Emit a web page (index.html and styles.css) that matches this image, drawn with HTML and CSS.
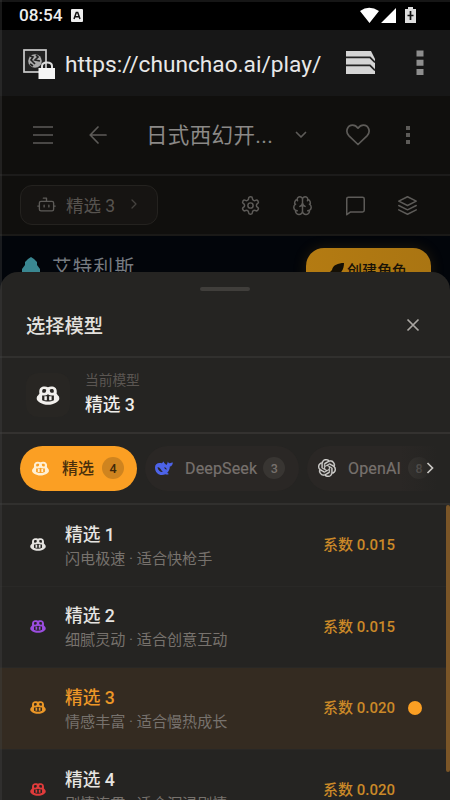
FILE: index.html
```html
<!DOCTYPE html>
<html lang="zh-CN">
<head>
<meta charset="utf-8">
<title>选择模型</title>
<link rel="stylesheet" href="styles.css">
</head>
<body>
<svg width="0" height="0" class="defs">
  <symbol id="copilot" viewBox="0 0 24 20">
    <path fill="currentColor" fill-rule="evenodd" d="M12 1.200C13.800.3 16 .2 18 .9c2 .7 3 2.300 3.200 4.300.1 1.200 0 2-.2 2.700L22.500 10c1.100.8 1.400 1.900 1.400 3.400 0 2.600-5.600 6.400-11.900 6.400S.1 16 .1 13.400C.1 11.900.4 10.800 1.500 10L3 7.900c-.2-.7-.3-1.500-.2-2.700C3 3.200 4 1.600 6 .9c2-.7 4.200-.6 6 .3ZM6.400 3.600c-.6.500-.7 2.600-.2 3.200.6.600 2.700.5 3.300-.3.500-.6.800-2.200.4-2.800-.5-.8-2.800-.7-3.500-.1Zm11.200 0c-.7-.6-3-.7-3.500.1-.4.600-.1 2.200.4 2.800.6.800 2.700.9 3.300.3.500-.6.400-2.700-.2-3.200ZM12 8.800c-1.600 1.300-4.200 1.600-6.200 1.100v5.100c3.400 1.900 9 1.900 12.400 0V9.900c-2 .5-4.600.2-6.200-1.100Z"/>
    <path fill="currentColor" d="M8.200 10.800h2.600v4.200H8.200zM13.200 10.800h2.600v4.200h-2.600z"/>
  </symbol>
</svg>
<div class="phone">
  <header class="status">
    <span>08:54</span>
    <svg class="lang" width="12" height="13" viewBox="0 0 12 13"><rect width="12" height="13" rx="1" fill="#eee"/><path d="M3 10 5.300 3.500h1.400L9 10M4 7.700h4" fill="none" stroke="#111" stroke-width="1.500"/></svg>
    <svg class="signals" width="58" height="18" viewBox="0 0 58 18"><path d="M0 5Q9-1.500 19 5L9.500 17ZM21 17 36 2v15Z" fill="#fff"/><path d="M45 3h3V1h5v2h3v14H45Z" fill="#ddd"/><path d="M50.500 5v9M47.500 9.500h6" stroke="#111" stroke-width="1.700"/></svg>
  </header>
  <div class="browser">
    <svg width="34" height="32" viewBox="0 0 34 32"><rect x="2" y="2" width="22" height="22" fill="#222" stroke="#ccc" stroke-width="1.700"/><circle cx="13" cy="13" r="6.800" fill="#aaa"/><path d="m8 8 3 1-2 3 4 4m1-9 2 2-3 3 5 1m-10 3 3 2" stroke="#222" stroke-width="1.700" fill="none"/><path d="M20 21v-3q0-3.500 5-3.500t5 3.500v3" fill="none" stroke="#ddd" stroke-width="2"/><path d="M16.500 20h16.500v11H16.500Z" fill="#f5f5f5"/></svg>
    <span class="url">https://chunchao.ai/play/</span>
    <svg class="stack" width="32" height="26" viewBox="0 0 32 26"><path d="M1 1h25l4 8v15H1Z" fill="#d5d5d5"/><path d="M1 7.300h24l5 5M1 15.300h24l5 5" fill="none" stroke="#242424" stroke-width="1.800"/></svg>
    <svg class="menu" width="8" height="26" viewBox="0 0 8 26"><path d="M.5.500h7v6h-7zM.5 9.800h7v6h-7zM.5 19h7v6h-7z" fill="#8e8e8e"/></svg>
  </div>
  <div class="app-head">
    <svg class="burger" width="20" height="20" viewBox="0 0 20 20"><path d="M0 2h20M0 10h20M0 18h20"/></svg>
    <svg class="back" width="18" height="18" viewBox="0 0 18 18"><path d="M17 9H1.500M9 1 1.200 9 9 17"/></svg>
    <span class="name">日式西幻开...</span>
    <svg class="down" width="12" height="8" viewBox="0 0 12 8"><path d="m1.500 1.500 4.500 4.500 4.500-4.500"/></svg>
    <svg class="heart" width="24" height="22" viewBox="0 0 24 22"><path d="M12 20.500 3 11.800C-1.200 7.500 1.500 1.200 6.600 1.200c2.500 0 4.100 1.300 5.400 3 1.300-1.700 2.900-3 5.400-3 5.100 0 7.800 6.300 3.600 10.600Z"/></svg>
    <svg width="6" height="20" viewBox="0 0 6 20"><path class="dots" d="M1 1h4v4H1zM1 8h4v4H1zM1 15h4v4H1z"/></svg>
  </div>
  <div class="tools">
    <div class="chip">
      <svg width="19" height="19" viewBox="0 0 24 24"><path d="M12 8V4H8M5 8h14q2 0 2 2v8q0 2-2 2H5q-2 0-2-2v-8q0-2 2-2ZM1 14h2M21 14h2M9 13v2M15 13v2"/></svg>
      <span>精选 3</span>
      <svg class="chev" width="6" height="10" viewBox="0 0 6 10"><path d="m1 1 4 4-4 4"/></svg>
    </div>
    <div class="actions">
      <svg width="21" height="21" viewBox="0 0 24 24"><path d="M12.200 2h-.4a2 2 0 0 0-2 2v.2a2 2 0 0 1-1 1.700l-.4.300a2 2 0 0 1-2 0l-.2-.1a2 2 0 0 0-2.700.7l-.2.400a2 2 0 0 0 .7 2.700l.2.100a2 2 0 0 1 1 1.700v.5a2 2 0 0 1-1 1.700l-.2.100a2 2 0 0 0-.7 2.700l.2.400a2 2 0 0 0 2.700.7l.2-.1a2 2 0 0 1 2 0l.4.300a2 2 0 0 1 1 1.700v.2a2 2 0 0 0 2 2h.4a2 2 0 0 0 2-2v-.2a2 2 0 0 1 1-1.700l.4-.3a2 2 0 0 1 2 0l.2.100a2 2 0 0 0 2.700-.7l.2-.4a2 2 0 0 0-.7-2.700l-.2-.1a2 2 0 0 1-1-1.700v-.5a2 2 0 0 1 1-1.700l.2-.1a2 2 0 0 0 .7-2.700l-.2-.4a2 2 0 0 0-2.700-.7l-.2.100a2 2 0 0 1-2 0l-.4-.3a2 2 0 0 1-1-1.700V4a2 2 0 0 0-2-2Z"/><circle cx="12" cy="12" r="3"/></svg>
      <svg width="21" height="21" viewBox="0 0 24 24"><path d="M12 5a3 3 0 1 0-6 .1 4 4 0 0 0-2.500 5.800 4 4 0 0 0 .6 6.600A4 4 0 1 0 12 18ZM12 5a3 3 0 1 1 6 .1 4 4 0 0 1 2.500 5.800 4 4 0 0 1-.6 6.600A4 4 0 1 1 12 18M15 13a4.500 4.500 0 0 1-3-4 4.500 4.500 0 0 1-3 4M6 5.100q0 1 .4 1.400M18 5.100q0 1-.4 1.400M3.500 10.900l.6-.4M20.500 10.900l-.6-.4M6 18l-2-.5M18 18l2-.5"/></svg>
      <svg width="21" height="21" viewBox="0 0 24 24"><path d="M22 17.500q0 2-2 2H6l-4 3V4.500q0-2 2-2h16q2 0 2 2Z"/></svg>
      <svg width="21" height="21" viewBox="0 0 24 24"><path d="M12 2 2 7l10 5 10-5ZM2 12l10 5 10-5M2 17l10 5 10-5"/></svg>
    </div>
  </div>
  <div class="hero">
    <svg class="tree" width="18" height="20" viewBox="0 0 18 20"><path d="M9 0 12 2 15 5v3l3 4v3h-2v5H2v-5H0v-3l3-4V5l3-3Z" fill="#3a8791"/></svg>
    <span class="brand">艾特利斯</span>
    <div class="create"><svg width="14" height="14" viewBox="0 0 14 14"><path d="M14 0C8 0 3 2 2 7L0 9l2 1-1 4 4-2c6 0 9-6 9-12Z" fill="#151005"/></svg><span>创建角色</span></div>
  </div>
  <section class="sheet">
    <div class="handle"></div>
    <div class="sheet-head"><span>选择模型</span><svg width="14" height="14" viewBox="0 0 14 14"><path d="m1.500 1.500 11 11M12.500 1.500l-11 11" stroke="#aaa6a2" stroke-width="1.700"/></svg></div>
    <div class="current">
      <div class="avatar"><svg width="24" height="19"><use href="#copilot"/></svg></div>
      <div class="current-text"><small>当前模型</small><b>精选 3</b></div>
    </div>
    <div class="tabs">
      <div class="tab on"><svg width="17" height="15"><use href="#copilot"/></svg><span>精选</span><i>4</i></div>
      <div class="tab deep"><svg width="18" height="15" viewBox="0 0 24 20"><path fill="#4d63e8" fill-rule="evenodd" d="M23.800 2.200c-.4 3-1.500 4.600-4 5.200-.2 3.700-1.300 6.200-3.500 8.300l2.200 1.500c-1.600 1.200-3.400 1-4.600.3C7.200 20.700 0 16.500 0 8.500 0 4 4 1.500 9 3.100c1.300-.1 1-1.400 2.500-2.300.3 2 1.700 3 3.600 4.600C16.500 4 16.800 2.400 17 .8c.7 1.600 1.700 2.300 3 2.200 1.400-.2 2.400-1.200 3.800-.8ZM3.500 8c0 3.800 3 6.800 7 6.800C8.300 12.500 7.500 9 3.500 8Zm9 .2c-.6 1.300.8 2.600 2.800 3.500.5-1.600-.4-3.200-2.800-3.500Z"/></svg><span>DeepSeek</span><i>3</i></div>
      <div class="tab open"><svg width="18" height="18" viewBox="0 0 24 24"><path fill="#d4d3d1" stroke="#d4d3d1" stroke-width=".4" d="M22.2819 9.8211a5.9847 5.9847 0 0 0-.5157-4.9108 6.0462 6.0462 0 0 0-6.5098-2.9A6.0651 6.0651 0 0 0 4.9807 4.1818a5.9847 5.9847 0 0 0-3.9977 2.9 6.0462 6.0462 0 0 0 .7427 7.0966 5.98 5.98 0 0 0 .511 4.9107 6.051 6.051 0 0 0 6.5146 2.9001A5.9847 5.9847 0 0 0 13.2599 24a6.0557 6.0557 0 0 0 5.7718-4.2058 5.9894 5.9894 0 0 0 3.9977-2.9001 6.0557 6.0557 0 0 0-.7475-7.0729zm-9.022 12.6081a4.4755 4.4755 0 0 1-2.8764-1.0408l.1419-.0804 4.7783-2.7582a.7948.7948 0 0 0 .3927-.6813v-6.7369l2.02 1.1686a.071.071 0 0 1 .038.052v5.5826a4.504 4.504 0 0 1-4.4945 4.4944zm-9.6607-4.1254a4.4708 4.4708 0 0 1-.5346-3.0137l.142.0852 4.783 2.7582a.7712.7712 0 0 0 .7806 0l5.8428-3.3685v2.3324a.0804.0804 0 0 1-.0332.0615L9.74 19.9502a4.4992 4.4992 0 0 1-6.1408-1.6464zM2.3408 7.8956a4.485 4.485 0 0 1 2.3655-1.9728V11.6a.7664.7664 0 0 0 .3879.6765l5.8144 3.3543-2.0201 1.1685a.0757.0757 0 0 1-.071 0l-4.8303-2.7865A4.504 4.504 0 0 1 2.3408 7.872zm16.5963 3.8558L13.1038 8.364 15.1192 7.2a.0757.0757 0 0 1 .071 0l4.8303 2.7913a4.4944 4.4944 0 0 1-.6765 8.1042v-5.6772a.79.79 0 0 0-.407-.667zm2.0107-3.0231l-.142-.0852-4.7735-2.7818a.7759.7759 0 0 0-.7854 0L9.409 9.2297V6.8974a.0662.0662 0 0 1 .0284-.0615l4.8303-2.7866a4.4992 4.4992 0 0 1 6.6802 4.66zM8.3065 12.863l-2.02-1.1638a.0804.0804 0 0 1-.038-.0567V6.0742a4.4992 4.4992 0 0 1 7.3757-3.4537l-.142.0805L8.704 5.459a.7948.7948 0 0 0-.3927.6813zm1.0976-2.3654l2.602-1.4998 2.6069 1.4998v2.9994l-2.5974 1.4997-2.6067-1.4997Z"/></svg><span>OpenAI</span><i>8</i></div>
      <div class="more"><svg width="8" height="12" viewBox="0 0 8 12"><path d="m1.500 1 5 5-5 5" fill="none" stroke="#c9c7c4" stroke-width="1.700"/></svg></div>
    </div>
    <div class="list">
      <div class="row"><svg width="16" height="13"><use href="#copilot"/></svg><div class="info"><b>精选 1</b><span>闪电极速 · 适合快枪手</span></div><em>系数 0.015</em></div>
      <div class="row purple"><svg width="16" height="13"><use href="#copilot"/></svg><div class="info"><b>精选 2</b><span>细腻灵动 · 适合创意互动</span></div><em>系数 0.015</em></div>
      <div class="row active"><svg width="16" height="13"><use href="#copilot"/></svg><div class="info"><b>精选 3</b><span>情感丰富 · 适合慢热成长</span></div><em>系数 0.020</em><div class="dot"></div></div>
      <div class="row red"><svg width="16" height="13"><use href="#copilot"/></svg><div class="info"><b>精选 4</b><span>剧情连贯 · 适合沉浸剧情</span></div><em>系数 0.020</em></div>
      <div class="scrollbar"></div>
    </div>
  </section>
</div>
</body>
</html>
```
FILE: styles.css
```css
* { box-sizing: border-box; }
body { margin: 0; background: #000; font-family: Roboto, "Noto Sans CJK SC", sans-serif; }
svg { display: block; flex: none; }
span, b, em, small, i { white-space: nowrap; font-style: normal; }
.defs { position: absolute; }
.phone { position: relative; width: 450px; height: 800px; overflow: hidden; background: #100f0d; display: flex; flex-direction: column; }
.phone::after { content: ""; position: absolute; left: 0; top: 0; bottom: 0; width: 2px; background: rgba(70, 70, 70, .35); }
.status { height: 30px; flex: none; background: #000; border-top: 2px solid #161616; display: flex; align-items: center; padding: 0 34px 2px 19px; color: #eee; font-size: 17.200px; font-weight: 500; }
.lang { margin-left: 8px; }
.signals { margin-left: auto; margin-right: -2px; }
.browser { height: 66px; flex: none; background: #171717; display: flex; align-items: center; padding: 0 26px 0 22px; color: #e8e8e8; }
.browser > svg:first-child { margin-top: 2px; }
.url { width: 268px; margin: 2px 0 0 9px; font-size: 22.700px; }
.stack { margin-left: 12px; }
.menu { margin-left: auto; }
.app-head { height: 80px; flex: none; display: flex; align-items: center; padding: 0 39px 0 33px; border-bottom: 2px solid #1c1b1a; }
.app-head path, .tools path, .tools circle { fill: none; stroke: #5d5b58; stroke-width: 1.700; stroke-linecap: round; stroke-linejoin: round; }
.app-head .burger path { stroke: #494745; stroke-linecap: butt; stroke-width: 2; }
.app-head .dots { fill: #5d5b58; stroke: none; }
.back { margin-left: 36px; }
.name { width: 128px; margin: -3px 0 0 39px; font-size: 21.500px; letter-spacing: .35px; color: #8b8987; }
.down { margin-left: 21px; }
.heart { margin-left: 39px; margin-right: auto; }
.tools { height: 60px; flex: none; display: flex; align-items: center; justify-content: space-between; padding: 0 32px 0 20px; border-bottom: 2px solid #1a1917; }
.chip { width: 138px; height: 40px; border: 1px solid #24221f; border-radius: 12px; background: #161412; display: flex; align-items: center; padding: 0 20px 2px 16px; color: #57534f; font-size: 17.500px; }
.chip span { margin-left: 10px; }
.chip .chev { margin-left: auto; }
.tools .chev path { stroke: #45423f; stroke-width: 1.300; }
.actions { display: flex; gap: 31.500px; }
.hero { height: 100px; flex: none; background: #02050a; display: flex; align-items: flex-start; padding: 12px 19px 0 22px; }
.tree { margin-top: 9px; }
.brand { margin: 6px 0 0 12px; font-size: 19.500px; line-height: 28px; letter-spacing: 1.300px; color: #777b80; }
.create { width: 125px; height: 43px; margin-left: auto; border-radius: 18px; background: linear-gradient(90deg, #b47b12, #aa7512); box-shadow: 0 0 14px rgba(180, 120, 20, .18); display: flex; align-items: center; justify-content: center; gap: 3px; color: #181207; font-size: 15px; font-weight: 500; }
.sheet { position: absolute; left: 0; right: 0; top: 272px; bottom: 0; background: #252422; border-radius: 18px 18px 0 0; overflow: hidden; display: flex; flex-direction: column; }
.handle { width: 50px; height: 4px; border-radius: 2px; background: #403e3b; margin: 15px auto 0; flex: none; }
.sheet-head { height: 67px; flex: none; border-bottom: 2px solid #31302e; display: flex; align-items: center; justify-content: space-between; padding: 3px 30px 0 26px; color: #e3e1de; font-size: 19.300px; font-weight: 500; }
.current { height: 76px; flex: none; border-bottom: 2px solid #343230; display: flex; align-items: center; padding-left: 26px; }
.avatar { width: 44px; height: 44px; border-radius: 12px; background: #282623; color: #f2f0ed; display: flex; align-items: center; justify-content: center; }
.current-text { display: flex; flex-direction: column; margin: -3px 0 0 15px; }
.current-text small { font-size: 13.700px; line-height: 22px; color: #5b5652; }
.current-text b { font-size: 17.700px; line-height: 28px; color: #efedea; font-weight: 500; }
.tabs { position: relative; height: 71px; flex: none; border-bottom: 2px solid #31302e; display: flex; align-items: center; gap: 8px; padding: 0 0 1px 20px; overflow: hidden; }
.tab { height: 45px; flex: none; border-radius: 23px; background: #2a2725; display: flex; align-items: center; color: #77716d; font-size: 16px; font-weight: 500; }
.tab i { width: 22px; height: 22px; border-radius: 50%; background: #383532; font-size: 12.500px; display: flex; align-items: center; justify-content: center; }
.tab.on { width: 117px; background: #fb9f23; color: #4a300c; padding-left: 12px; }
.tab.on svg { color: #fff0d4; }
.tab.on span { margin: -2px 0 0 13px; }
.tab.on i { margin-left: 8px; background: #cf841f; color: #3c270a; }
.tab.deep { width: 154px; padding-left: 10px; }
.tab.deep span, .tab.open span { margin-left: 12px; letter-spacing: .15px; font-weight: 400; -webkit-text-stroke: .2px currentColor; }
.tab.deep i { margin-left: 6px; }
.tab.open { width: 150px; padding-left: 11px; }
.tab.open i { margin-left: 7px; }
.more { position: absolute; right: 0; top: 0; width: 50px; height: 69px; padding: 0 16px 1px 0; display: flex; align-items: center; justify-content: flex-end; background: linear-gradient(90deg, transparent, #252422 75%); }
.list { position: relative; flex: 1; overflow: hidden; }
.row { height: 81.600px; display: flex; align-items: center; padding: 0 28px 1px 30px; border-bottom: 1px solid #292826; color: #e6e4e1; }
.info { display: flex; flex-direction: column; width: 240px; margin: 3px 0 0 19px; }
.info b { font-size: 17.700px; line-height: 26px; font-weight: 500; }
.info span { font-size: 15.100px; line-height: 23px; color: #77726d; }
.row em { margin: -2px 0 0 18px; color: #cb8928; font-size: 15px; font-weight: 500; }
.row.purple > svg { color: #9b4de0; }
.row.active { background: #342b21; }
.row.active > svg, .row.active b { color: #ec9727; }
.row.red > svg { color: #e03b3b; }
.dot { width: 14px; height: 14px; border-radius: 50%; background: #fb9f23; margin-left: auto; flex: none; }
.scrollbar { position: absolute; right: 0; top: 0; width: 4px; height: 267px; border-radius: 2px; background: #7a5527; }
```
